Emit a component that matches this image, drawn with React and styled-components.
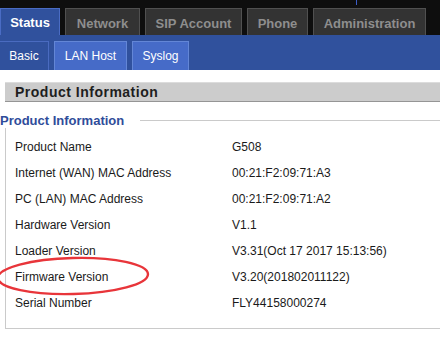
import React from "react";
import styled, { createGlobalStyle } from "styled-components";

const Global = createGlobalStyle`
  html, body { margin: 0; padding: 0; background: #ffffff; }
  body { font-family: "Liberation Sans", Arial, sans-serif; overflow: hidden; }
  #root { width: 440px; height: 338px; }
`;

const Page = styled.div`
  position: relative;
  width: 440px;
  height: 338px;
  overflow: hidden;
  background: #fff;
`;

const TopBar = styled.div`
  position: relative;
  height: 35px;
  box-sizing: border-box;
  padding-top: 8px;
  background: #0e0e0e;
  display: flex;
  align-items: flex-end;
  gap: 5px;
  &::after {
    content: "";
    position: absolute;
    left: 356px;
    top: 0;
    width: 1px;
    height: 5px;
    background: #3a5cc8;
  }
`;

const MainTab = styled.div`
  width: ${(p) => p.$w}px;
  height: 27px;
  box-sizing: border-box;
  display: flex;
  align-items: center;
  justify-content: center;
  font-size: 13px;
  font-weight: bold;
  border: 1px solid ${(p) => (p.$active ? "#4a6cc4" : "#505050")};
  border-bottom: none;
  background: ${(p) => (p.$active ? "#30519d" : "#333333")};
  color: ${(p) => (p.$active ? "#ffffff" : "#8e8e8e")};
  padding-top: ${(p) => (p.$active ? "0" : "2px")};
`;

const SubBar = styled.div`
  height: 35px;
  box-sizing: border-box;
  padding-top: 6px;
  background: #30519d;
  display: flex;
  align-items: flex-end;
  gap: 5px;
`;

const SubTab = styled.div`
  width: ${(p) => p.$w}px;
  height: 29px;
  box-sizing: border-box;
  display: flex;
  align-items: center;
  justify-content: center;
  font-size: 12px;
  color: #ffffff;
  border: 1px solid ${(p) => (p.$active ? "#4a6bc0" : "#6386d6")};
  border-bottom: none;
  border-left: ${(p) => (p.$active ? "none" : undefined)};
  background: ${(p) => (p.$active ? "#30519d" : "#466bc8")};
`;

const SectionBar = styled.div`
  margin: 12px 0 0 5px;
  height: 20px;
  box-sizing: border-box;
  background: #cccccc;
  border-top: 1px solid #dcdcdc;
  border-bottom: 1px solid #959595;
  display: flex;
  align-items: center;
  padding-left: 10px;
  font-size: 14px;
  font-weight: bold;
  letter-spacing: 0.5px;
  color: #1e1e1e;
`;

const LegendRow = styled.div`
  margin-top: 11px;
  height: 15px;
  display: flex;
  align-items: center;
`;

const Legend = styled.div`
  font-size: 13px;
  font-weight: bold;
  line-height: 15px;
  color: #2f4c9a;
  padding-right: 16px;
`;

const LegendLine = styled.div`
  flex: 1;
  height: 1px;
  background: #cacaca;
`;

const Box = styled.div`
  margin-left: 5px;
  border-left: 1px solid #cacaca;
  border-bottom: 1px solid #cacaca;
  padding: 6px 0 12px 9px;
`;

const Row = styled.div`
  display: grid;
  grid-template-columns: 217px 1fr;
  height: 26px;
  line-height: 26px;
  font-size: 12px;
  color: #1a1a1a;
  white-space: nowrap;
`;

const Annotation = styled.svg`
  position: absolute;
  left: -4px;
  top: 254px;
  overflow: visible;
`;

const mainTabs = [
  { label: "Status", w: 60, active: true },
  { label: "Network", w: 75 },
  { label: "SIP Account", w: 97 },
  { label: "Phone", w: 61 },
  { label: "Administration", w: 113 },
];

const subTabs = [
  { label: "Basic", w: 49, active: true },
  { label: "LAN Host", w: 73 },
  { label: "Syslog", w: 57 },
];

const rows = [
  ["Product Name", "G508"],
  ["Internet (WAN) MAC Address", "00:21:F2:09:71:A3"],
  ["PC (LAN) MAC Address", "00:21:F2:09:71:A2"],
  ["Hardware Version", "V1.1"],
  ["Loader Version", "V3.31(Oct 17 2017 15:13:56)"],
  ["Firmware Version", "V3.20(201802011122)"],
  ["Serial Number", "FLY44158000274"],
];

export default function App() {
  return (
    <Page>
      <Global />
      <TopBar>
        {mainTabs.map((t) => (
          <MainTab key={t.label} $w={t.w} $active={t.active}>
            {t.label}
          </MainTab>
        ))}
      </TopBar>
      <SubBar>
        {subTabs.map((t) => (
          <SubTab key={t.label} $w={t.w} $active={t.active}>
            {t.label}
          </SubTab>
        ))}
      </SubBar>
      <SectionBar>Product Information</SectionBar>
      <LegendRow>
        <Legend>Product Information</Legend>
        <LegendLine />
      </LegendRow>
      <Box>
        {rows.map(([k, v]) => (
          <Row key={k}>
            <span>{k}</span>
            <span>{v}</span>
          </Row>
        ))}
      </Box>
      <Annotation width="160" height="44" viewBox="0 0 160 44">
        <ellipse
          cx="77"
          cy="22"
          rx="75"
          ry="18"
          fill="none"
          stroke="#e8353a"
          strokeWidth="2.4"
          transform="rotate(-1.5 77 22)"
        />
      </Annotation>
    </Page>
  );
}
